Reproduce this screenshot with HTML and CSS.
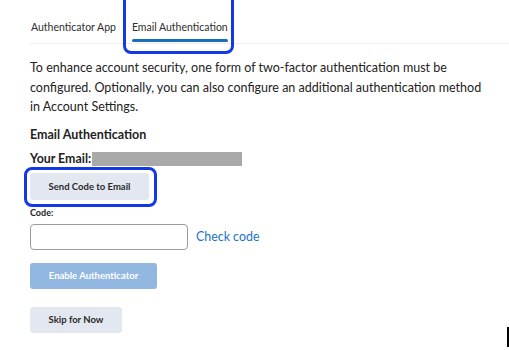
FILE: index.html
```html
<!DOCTYPE html>
<html lang="en">
<head>
    <meta charset="UTF-8">
    <meta name="viewport" content="width=device-width, initial-scale=1.0">
    <title>Two-Factor Authentication</title>
    <link rel="stylesheet" href="styles.css">
</head>
<body>
    <div class="tabs">
        <div class="tab">Authenticator App</div>
        <div class="tab active">Email Authentication<span class="mark mark-tab"></span></div>
    </div>

    <div class="content">
        <p class="intro">To enhance account security, one form of two-factor authentication must be configured. Optionally, you can also configure an additional authentication method in Account Settings.</p>

        <h3 class="section-title">Email Authentication</h3>
        <div class="email-row">Your Email:<span class="email-hidden"></span></div>

        <div class="send-wrap">
            <button class="btn btn-light btn-send">Send Code to Email</button>
            <span class="mark mark-send"></span>
        </div>

        <label class="code-label" for="code">Code:</label>
        <div class="code-row">
            <input type="text" id="code" class="code-input">
            <a href="#" class="check-link">Check code</a>
        </div>

        <button class="btn btn-primary btn-enable">Enable Authenticator</button>
        <button class="btn btn-light btn-skip">Skip for Now</button>
    </div>

    <div class="cursor"></div>
</body>
</html>
```

FILE: styles.css
```css
body {
    margin: 0;
    font-family: Lato, "Liberation Sans", sans-serif;
    color: #222;
    background: #fff;
    position: relative;
    height: 350px;
    overflow: hidden;
}
.tabs {
    display: flex;
    margin-left: 29px;
    padding-left: 2px;
    border-bottom: 1px solid #eceef4;
}
.tab {
    position: relative;
    font-size: 10.5px;
    line-height: 16px;
    padding: 19px 0 8px;
    margin-right: 16px;
    color: #2e2e2e;
}
.tab.active::after {
    content: "";
    position: absolute;
    left: 0;
    right: 0;
    bottom: 1px;
    height: 3px;
    border-radius: 2px;
    background: #1a6dbd;
}
.mark {
    position: absolute;
    border: 3px solid #1438e4;
    border-radius: 8px;
    pointer-events: none;
}
.mark-tab {
    left: -9px;
    right: -6px;
    top: -12px;
    bottom: -11px;
}
.content {
    padding-left: 30px;
}
.intro {
    margin: 14px 0 0;
    width: 455px;
    font-size: 12.5px;
    line-height: 19.5px;
}
.section-title {
    margin: 10px 0 0;
    font-size: 12.5px;
    line-height: 16px;
    font-weight: bold;
}
.email-row {
    margin-top: 8px;
    font-size: 12.4px;
    line-height: 16px;
    font-weight: bold;
    display: flex;
    align-items: center;
}
.email-hidden {
    display: inline-block;
    width: 150px;
    height: 14px;
    margin-left: 1px;
    background: #a9a9a9;
}
.send-wrap {
    position: relative;
    margin-top: 6px;
    width: 119px;
}
.mark-send {
    left: -6px;
    right: -8px;
    top: -6px;
    bottom: -7px;
}
.btn {
    display: block;
    border: none;
    border-radius: 3px;
    font-family: Lato, "Liberation Sans", sans-serif;
    font-size: 9.5px;
    font-weight: bold;
    height: 27px;
    padding: 0;
    cursor: pointer;
}
.btn-light {
    background: #e3e8f0;
    color: #2a2a2a;
}
.btn-primary {
    background: #92b7e1;
    color: #fff;
}
.btn-send {
    width: 119px;
}
.code-label {
    display: block;
    margin-top: 7px;
    font-size: 9px;
    line-height: 12px;
    font-weight: bold;
}
.code-row {
    display: flex;
    align-items: center;
    gap: 8px;
    margin-top: 5px;
}
.code-input {
    box-sizing: border-box;
    width: 158px;
    height: 26px;
    border: 1px solid #9c9c9c;
    border-radius: 4px;
    margin: 0;
}
.check-link {
    color: #1b72c4;
    font-size: 12.4px;
    text-decoration: none;
}
.btn-enable {
    margin-top: 13px;
    width: 127px;
    height: 26px;
}
.btn-skip {
    margin-top: 18px;
    width: 92px;
    height: 26px;
}
.cursor {
    position: absolute;
    left: 507px;
    top: 327px;
    width: 2px;
    height: 20px;
    background: #000;
}
```
